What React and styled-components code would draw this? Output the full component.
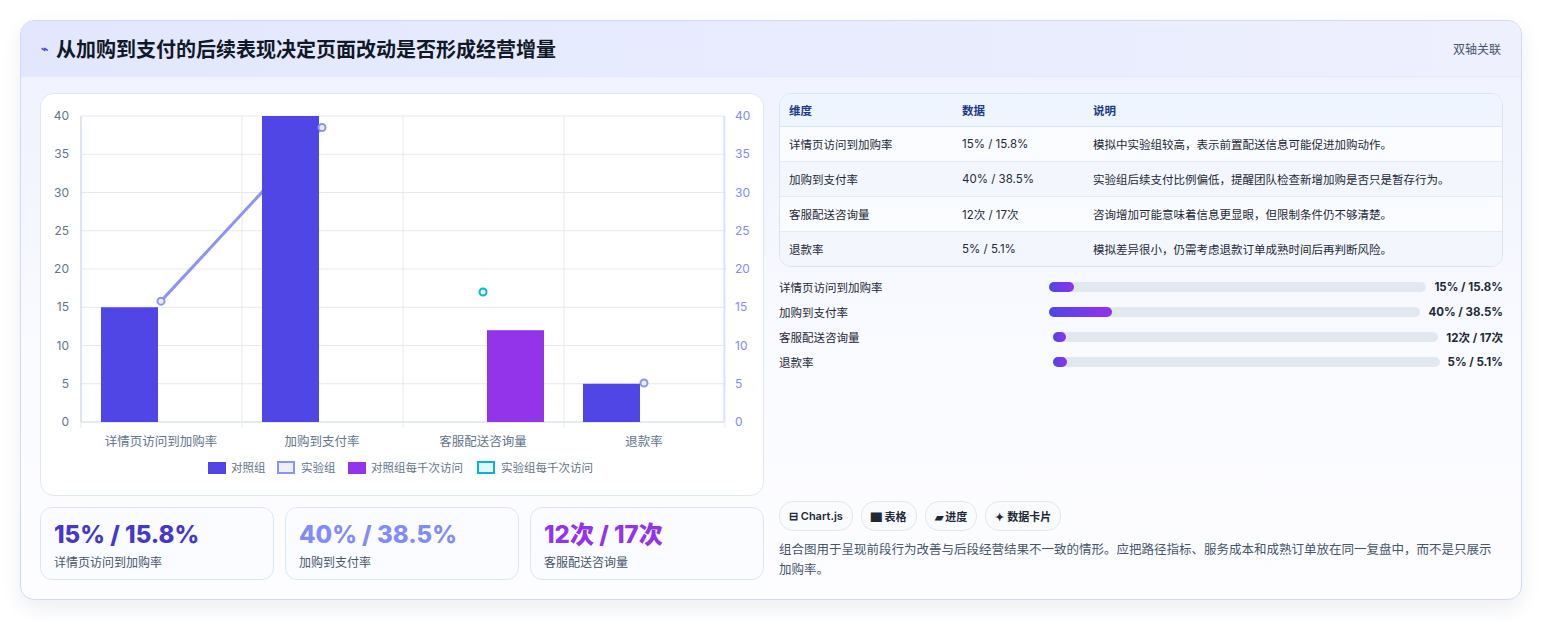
import React from "react";
import styled, { createGlobalStyle } from "styled-components";

const G = createGlobalStyle`
  body{margin:0;background:#f3f4f6;font-family:Inter,"Noto Sans CJK SC",sans-serif;}
`;
const Page = styled.div`padding:20px 20px 20px 20px;background:#fff;height:581px;`;
const Card = styled.div`width:1500px;border:1px solid #d4d9f3;border-radius:14px;background:linear-gradient(180deg,#eef1fd,#fafbff 60%,#fdfdff);box-shadow:0 8px 20px rgba(30,40,90,.08);overflow:hidden;`;
const Header = styled.div`height:55px;display:flex;align-items:center;justify-content:space-between;padding:0 20px;background:linear-gradient(90deg,#e2e7fd,#eef0fe);border-bottom:1px solid #e4e8fb;`;
const Title = styled.h1`margin:0;font-size:20px;font-weight:700;color:#111827;display:flex;align-items:center;gap:8px;`;
const Icon = styled.span`color:#4f46e5;font-size:12px;`;
const Tag = styled.span`font-size:12px;color:#475569;`;
const Body = styled.div`display:grid;grid-template-columns:724px 724px;gap:15px;padding:16px 19px 19px 19px;`;
const Col = styled.div`display:flex;flex-direction:column;gap:${p=>p.gap}px;`;
const ChartBox = styled.div`height:403px;background:#fff;border:1px solid #e1e6f3;border-radius:14px;box-sizing:border-box;`;
const Kpis = styled.div`display:grid;grid-template-columns:repeat(3,1fr);gap:11px;`;
const Kpi = styled.div`height:73px;box-sizing:border-box;border:1px solid #dde5f5;border-radius:12px;background:#fbfcff;padding:12px 13px;`;
const KV = styled.div`font-size:24px;font-weight:800;color:${p=>p.c};line-height:30px;`;
const KL = styled.div`font-size:12px;color:#475569;margin-top:3px;`;
const Table = styled.table`width:100%;border-collapse:separate;border-spacing:0;border:1px solid #dbe3f1;border-radius:12px;overflow:hidden;font-size:11.5px;background:#f8fbff;`;
const Th = styled.th`text-align:left;font-weight:600;color:#1e3a8a;background:#eef5ff;height:32px;padding:0 9px;border-bottom:1px solid #dbe3f1;width:${p=>p.w||"auto"};`;
const Td = styled.td`height:34px;padding:0 9px;color:#1f2937;border-bottom:${p=>p.last?"none":"1px solid #e5eaf3"};background:${p=>p.alt?"#f3f7fd":"#fafcff"};`;
const Bars = styled.div`display:flex;flex-direction:column;gap:8px;margin-top:11px;`;
const BarRow = styled.div`display:grid;grid-template-columns:270px 1fr auto;align-items:center;height:17px;font-size:11.5px;color:#1f2937;`;
const Track = styled.div`height:10px;background:#e2e8f0;border-radius:6px;margin-right:8px;margin-left:${p=>p.ml}px;`;
const Fill = styled.div`height:100%;border-radius:6px;background:linear-gradient(90deg,#4f46e5,#9333ea);`;
const Val = styled.span`font-weight:700;font-size:11.5px;`;
const Spacer = styled.div`flex:1;`;
const Chips = styled.div`display:flex;gap:8px;`;
const Chip = styled.span`height:28px;display:inline-flex;align-items:center;padding:0 9px;border:1px solid #e5e7eb;border-radius:14px;background:#fafbfc;font-size:11px;font-weight:600;color:#1f2937;`;
const Para = styled.p`margin:9px 0 0;padding-right:8px;font-size:12.5px;line-height:20px;color:#475569;`;

const sx = v => 40 + 161 * v;
const sy = v => 328 - v * 7.65;

function Chart() {
  const cats = ["详情页访问到加购率","加购到支付率","客服配送咨询量","退款率"];
  return (
    <svg width="722" height="401" viewBox="0 0 722 401" style={{display:"block"}}>
      {[0,5,10,15,20,25,30,35,40].map(v=>(
        <g key={v}>
          <line x1="40" x2="683" y1={sy(v)} y2={sy(v)} stroke={v===0?"#cbd5e1":"#e5e9f0"}/>
          <text x="28" y={sy(v)+4} fontSize="12" fill="#64748b" textAnchor="end">{v}</text>
          <text x="694" y={sy(v)+4} fontSize="12" fill="#818cf8">{v}</text>
        </g>
      ))}
      {[0,1,2,3,4].map(i=><line key={i} x1={sx(i)} x2={sx(i)} y1={sy(40)} y2={sy(0)+6} stroke="#e5e9f0"/>)}
      <line x1="40" x2="40" y1={sy(40)} y2={sy(0)} stroke="#cbd5e1"/>
      <line x1="683" x2="683" y1={sy(40)} y2={sy(0)} stroke="#c7d2fe"/>
      {cats.map((c,i)=><text key={c} x={sx(i)+80} y="352" fontSize="12.5" fill="#64748b" textAnchor="middle">{c}</text>)}
      <polyline points={`${sx(0)+80},${sy(15.8)} ${sx(1)+80},${sy(38.5)}`} fill="none" stroke="#8b93f5" strokeWidth="3"/>
      <rect x={sx(0)+20} y={sy(15)} width="57" height={15*7.65} fill="#4f46e5"/>
      <rect x={sx(1)+20} y={sy(40)} width="57" height={40*7.65} fill="#4f46e5"/>
      <rect x={sx(3)+19} y={sy(5)} width="57" height={5*7.65} fill="#4f46e5"/>
      <rect x={sx(2)+84} y={sy(12)} width="57" height={12*7.65} fill="#9333ea"/>
      {[[0,15.8],[1,38.5],[3,5.1]].map(([i,v])=><circle key={i} cx={sx(i)+80} cy={sy(v)} r="3.5" fill="#eef0ff" stroke="#8b93f5" strokeWidth="2"/>)}
      <circle cx={sx(2)+80} cy={sy(17)} r="3.5" fill="#e0f7fb" stroke="#06b6d4" strokeWidth="2"/>
      <g fontSize="11.5" fill="#64748b">
        <rect x="167" y="368" width="18" height="12" fill="#4f46e5"/><text x="190" y="378">对照组</text>
        <rect x="237" y="368" width="16" height="11" fill="#eef0ff" stroke="#8b93f5" strokeWidth="2"/><text x="260" y="378">实验组</text>
        <rect x="307" y="368" width="18" height="12" fill="#9333ea"/><text x="330" y="378">对照组每千次访问</text>
        <rect x="437" y="368" width="16" height="11" fill="#e0f7fb" stroke="#06b6d4" strokeWidth="2"/><text x="460" y="378">实验组每千次访问</text>
      </g>
    </svg>
  );
}

const rows = [
  ["详情页访问到加购率","15% / 15.8%","模拟中实验组较高，表示前置配送信息可能促进加购动作。"],
  ["加购到支付率","40% / 38.5%","实验组后续支付比例偏低，提醒团队检查新增加购是否只是暂存行为。"],
  ["客服配送咨询量","12次 / 17次","咨询增加可能意味着信息更显眼，但限制条件仍不够清楚。"],
  ["退款率","5% / 5.1%","模拟差异很小，仍需考虑退款订单成熟时间后再判断风险。"],
];
const bars = [[0,6.5,"15% / 15.8%"],[0,17,"40% / 38.5%"],[4,3.5,"12次 / 17次"],[4,3.5,"5% / 5.1%"]];

export default function App(){
  return (<><G/><Page><Card>
    <Header><Title><Icon>⌁</Icon>从加购到支付的后续表现决定页面改动是否形成经营增量</Title><Tag>双轴关联</Tag></Header>
    <Body>
      <Col gap={11}>
        <ChartBox><Chart/></ChartBox>
        <Kpis>
          <Kpi><KV c="#4338ca">15% / 15.8%</KV><KL>详情页访问到加购率</KL></Kpi>
          <Kpi><KV c="#818cf8">40% / 38.5%</KV><KL>加购到支付率</KL></Kpi>
          <Kpi><KV c="#9333ea">12次 / 17次</KV><KL>客服配送咨询量</KL></Kpi>
        </Kpis>
      </Col>
      <Col gap={0}>
        <Table>
          <thead><tr><Th w="155px">维度</Th><Th w="113px">数据</Th><Th>说明</Th></tr></thead>
          <tbody>{rows.map((r,i)=><tr key={i}>{r.map((c,j)=><Td key={j} alt={i%2===1} last={i===3}>{c}</Td>)}</tr>)}</tbody>
        </Table>
        <Bars>
          {rows.map((r,i)=><BarRow key={i}><span>{r[0]}</span><Track ml={bars[i][0]}><Fill style={{width:bars[i][1]+"%"}}/></Track><Val>{bars[i][2]}</Val></BarRow>)}
        </Bars>
        <Spacer/>
        <Chips><Chip>⊟ Chart.js</Chip><Chip>▇ 表格</Chip><Chip>▰ 进度</Chip><Chip>✦ 数据卡片</Chip></Chips>
        <Para>组合图用于呈现前段行为改善与后段经营结果不一致的情形。应把路径指标、服务成本和成熟订单放在同一复盘中，而不是只展示加购率。</Para>
      </Col>
    </Body>
  </Card></Page></>);
}
